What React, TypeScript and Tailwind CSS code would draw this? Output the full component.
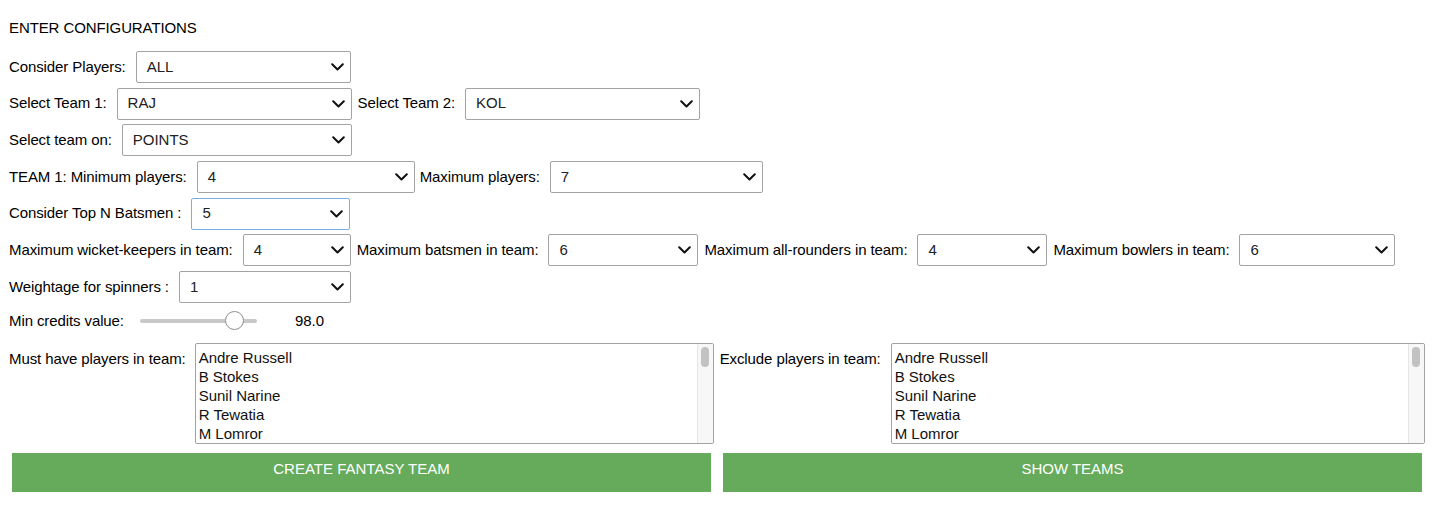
import { ReactNode } from "react";

const font = { fontFamily: '"Liberation Sans", Arial, sans-serif' };

const players = ["Andre Russell", "B Stokes", "Sunil Narine", "R Tewatia", "M Lomror"];

function Chevron() {
  return (
    <svg width="13" height="8" viewBox="0 0 13 8" className="shrink-0">
      <path d="M1.2 1.2l5.3 5.3 5.3-5.3" fill="none" stroke="#111" strokeWidth="2" strokeLinecap="round" strokeLinejoin="round" />
    </svg>
  );
}

function Dropdown({ value, w, focused }: { value: string; w: string; focused?: boolean }) {
  return (
    <div
      className={`${w} h-[32px] shrink-0 flex items-center justify-between pl-[10px] pr-[6px] bg-white border rounded-[2px] ${
        focused ? "border-[#7aaee6]" : "border-[#a3a3a3]"
      }`}
    >
      <span className="text-[15px] text-[#222]">{value}</span>
      <Chevron />
    </div>
  );
}

function Label({ children }: { children: ReactNode }) {
  return <span className="text-[15px] tracking-[-0.1px] text-black mr-[10px] whitespace-nowrap">{children}</span>;
}

function Row({ children }: { children: ReactNode }) {
  return <div className="flex items-center h-[32px]">{children}</div>;
}

function PlayerList({ w }: { w: string }) {
  return (
    <div className={`${w} h-[101px] shrink-0 flex bg-white border border-[#a3a3a3] rounded-[2px] overflow-hidden`}>
      <div className="flex-1 pl-[3px] pt-[4px]">
        {players.map((p) => (
          <div key={p} className="text-[15px] leading-[19px] text-[#111]">{p}</div>
        ))}
      </div>
      <div className="w-[16px] bg-[#f7f7f7] border-l border-[#e6e6e6] flex justify-center pt-[3px]">
        <div className="w-[8px] h-[20px] rounded-full bg-[#c2c2c2]" />
      </div>
    </div>
  );
}

export default function App() {
  return (
    <div className="w-[1436px] h-[508px] bg-white" style={font}>
      <div className="pl-[9px] pt-[19px]">
        <p className="text-[15px] leading-[18px] tracking-[-0.1px] text-black">ENTER CONFIGURATIONS</p>

        <div className="flex flex-col gap-[4.67px] mt-[14px]">
          <Row>
            <Label>Consider Players:</Label>
            <Dropdown value="ALL" w="w-[215px]" />
          </Row>
          <Row>
            <Label>Select Team 1:</Label>
            <Dropdown value="RAJ" w="w-[235px]" />
            <span className="ml-[6px]" />
            <Label>Select Team 2:</Label>
            <Dropdown value="KOL" w="w-[235px]" />
          </Row>
          <Row>
            <Label>Select team on:</Label>
            <Dropdown value="POINTS" w="w-[230px]" />
          </Row>
          <Row>
            <Label>TEAM 1: Minimum players:</Label>
            <Dropdown value="4" w="w-[218px]" />
            <span className="ml-[5px]" />
            <Label>Maximum players:</Label>
            <Dropdown value="7" w="w-[213px]" />
          </Row>
          <Row>
            <Label>Consider Top N Batsmen :</Label>
            <Dropdown value="5" w="w-[159px]" focused />
          </Row>
          <Row>
            <Label>Maximum wicket-keepers in team:</Label>
            <Dropdown value="4" w="w-[108px]" />
            <span className="ml-[6px]" />
            <Label>Maximum batsmen in team:</Label>
            <Dropdown value="6" w="w-[150px]" />
            <span className="ml-[6px]" />
            <Label>Maximum all-rounders in team:</Label>
            <Dropdown value="4" w="w-[130px]" />
            <span className="ml-[6px]" />
            <Label>Maximum bowlers in team:</Label>
            <Dropdown value="6" w="w-[156px]" />
          </Row>
          <Row>
            <Label>Weightage for spinners :</Label>
            <Dropdown value="1" w="w-[172px]" />
          </Row>
        </div>

        {/* credits slider */}
        <div className="flex items-center h-[24px] mt-[6px]">
          <span className="text-[15px] tracking-[-0.1px] text-black whitespace-nowrap">Min credits value:</span>
          <div className="relative w-[117px] h-[4px] ml-[16px] rounded-full bg-[#c8c8c8]">
            <div className="absolute left-[85px] top-[-8px] w-[19px] h-[19px] rounded-full bg-white border border-[#8e8e8e]" />
          </div>
          <span className="text-[15px] text-black ml-[38px]">98.0</span>
        </div>

        <div className="flex items-start mt-[10px]">
          <span className="text-[15px] tracking-[-0.1px] text-black mr-[9px] mt-[5px] whitespace-nowrap">Must have players in team:</span>
          <PlayerList w="w-[519px]" />
          <span className="text-[15px] tracking-[-0.1px] text-black ml-[6px] mr-[10px] mt-[5px] whitespace-nowrap">Exclude players in team:</span>
          <PlayerList w="w-[534px]" />
        </div>
      </div>

      <div className="flex gap-[12px] pl-[12px] mt-[9px]">
        <button className="w-[699px] h-[39px] pb-[7px] bg-[#66ab5b] text-white text-[15px]">CREATE FANTASY TEAM</button>
        <button className="w-[699px] h-[39px] pb-[7px] bg-[#66ab5b] text-white text-[15px]">SHOW TEAMS</button>
      </div>
    </div>
  );
}
